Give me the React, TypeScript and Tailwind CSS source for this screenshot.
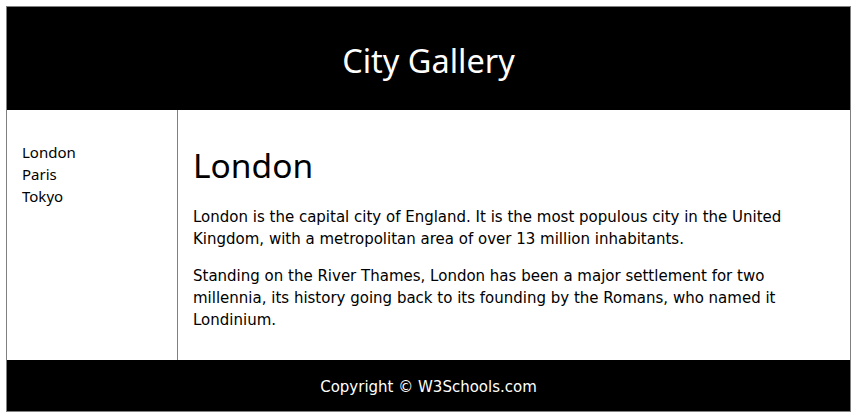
import * as React from "react";

const sans = "font-['Segoe_UI','Noto_Sans',sans-serif]";
const verdana = "font-['Verdana','DejaVu_Sans',sans-serif]";

const cities = ["London", "Paris", "Tokyo"];

export default function App() {
  return (
    <div className="bg-white min-h-[419px] pt-[6px]">
      <div className="ml-[6px] w-[845px] border border-[#808080]">
        {/* Header */}
        <header
          className={`h-[103px] bg-black text-white flex items-center justify-center pt-[5px] text-[32.5px] ${sans}`}
        >
          City Gallery
        </header>

        {/* Nav + article */}
        <div className="flex h-[250px]">
          <nav
            className={`w-[171px] border-r border-[#808080] pl-[15px] pt-[31px] text-[15px] leading-[22px] text-black ${sans}`}
          >
            <ul>
              {cities.map((city) => (
                <li key={city}>{city}</li>
              ))}
            </ul>
          </nav>

          <article className="flex-1 pl-[15px] pr-[16px]">
            <h1 className={`mt-[35px] text-[33.5px] leading-[40px] text-black ${sans}`}>London</h1>
            <p className={`mt-[21px] text-[15px] leading-[22px] text-black ${verdana}`}>
              London is the capital city of England. It is the most populous city in the United
              Kingdom, with a metropolitan area of over 13 million inhabitants.
            </p>
            <p className={`mt-[15px] text-[15px] leading-[22px] text-black ${verdana}`}>
              Standing on the River Thames, London has been a major settlement for two millennia,
              its history going back to its founding by the Romans, who named it Londinium.
            </p>
          </article>
        </div>

        {/* Footer */}
        <footer
          className={`h-[51px] bg-black text-white flex items-center justify-center pt-[3px] text-[15px] ${verdana}`}
        >
          Copyright © W3Schools.com
        </footer>
      </div>
    </div>
  );
}
